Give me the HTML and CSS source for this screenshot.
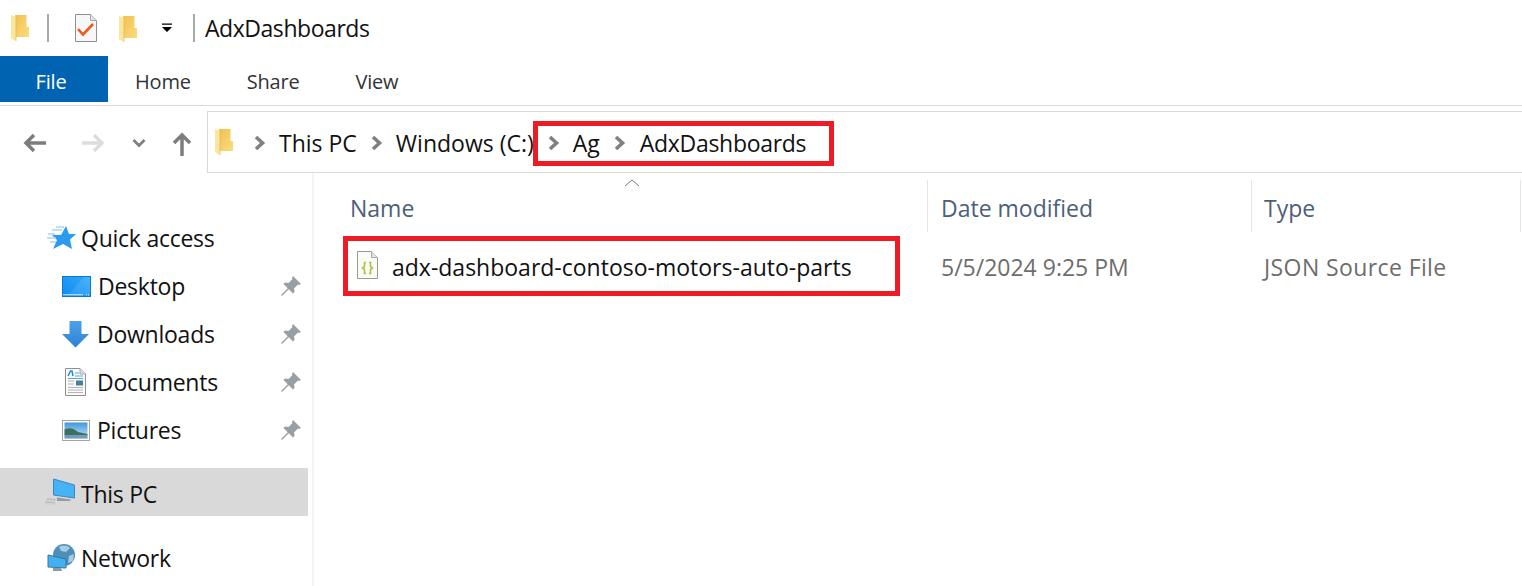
FILE: index.html
```html
<!DOCTYPE html>
<html lang="en">

<head>
   <meta charset="UTF-8">
   <title>AdxDashboards</title>
   <link rel="stylesheet" href="styles.css">
</head>

<body>
   <svg class="defs" width="0" height="0">
      <defs>
         <linearGradient id="folderBody" x1="0" y1="0" x2="1" y2="1">
            <stop offset="0" stop-color="#f0c14f" />
            <stop offset="1" stop-color="#fbdc80" />
         </linearGradient>
         <linearGradient id="deskBlue" x1="0" y1="1" x2="1" y2="0">
            <stop offset="0" stop-color="#0d8bf0" />
            <stop offset="1" stop-color="#33a9fb" />
         </linearGradient>
         <linearGradient id="arrowBlue" x1="0" y1="0" x2="0" y2="1">
            <stop offset="0" stop-color="#4ea1e8" />
            <stop offset="1" stop-color="#2b83d6" />
         </linearGradient>
         <linearGradient id="skyBlue" x1="0" y1="0" x2="0" y2="1">
            <stop offset="0" stop-color="#3f97dc" />
            <stop offset="1" stop-color="#cfe6f5" />
         </linearGradient>
         <symbol id="folder" viewBox="0 0 19 28">
            <path d="M4 1H15.500V13H18V23H4Z" fill="url(#folderBody)" />
            <path d="M0 1L5 3V27L1 25L0 24Z" fill="#fde59c" />
            <path d="M5 3V27" stroke="#e2b655" stroke-width=".7" />
         </symbol>
         <symbol id="chev" viewBox="0 0 12 16">
            <path d="M2 2L8.500 8L2 14" fill="none" stroke="#808080" stroke-width="3.600" />
         </symbol>
         <symbol id="pin" viewBox="0 0 22 22">
            <path d="M13 1L21 9L19 10L18 9.500L14 13.500L14.500 17L13 18.500L8.800 14.200L2 21L1 20L7.800 13.200L3.500 9L5 7.500L8.500 8L12.500 4L12 3Z" fill="#97a0a6" />
         </symbol>
      </defs>
   </svg>

   <header class="titlebar">
      <svg class="ico-folder"><use href="#folder" /></svg>
      <span class="qa-sep"></span>
      <svg class="ico-props" width="22" height="28" viewBox="0 0 22 28">
         <path d="M.5 .5H15.500L21.500 6.500V27.500H.5Z" fill="#f7f7f7" stroke="#8f8f8f" />
         <path d="M15.500 .5V6.500H21.500" fill="#e4e4e4" stroke="#a8a8a8" />
         <path d="M3 15L8 20.500L18 10" fill="none" stroke="#f2581c" stroke-width="2.600" />
      </svg>
      <svg class="ico-folder qa-second"><use href="#folder" /></svg>
      <svg class="qa-more" width="12" height="10" viewBox="0 0 12 10">
         <path d="M1 .5H11V1.800H1ZM1 4H11L6 9Z" fill="#000" />
      </svg>
      <span class="qa-sep qa-sep-last"></span>
      <span class="window-title">AdxDashboards</span>
   </header>

   <nav class="ribbon">
      <div class="tab tab-file">File</div>
      <div class="tab tab-home">Home</div>
      <div class="tab tab-share">Share</div>
      <div class="tab tab-view">View</div>
   </nav>

   <section class="addressrow">
      <div class="navbtns">
         <svg class="nav-back" width="24" height="20" viewBox="0 0 24 20">
            <path d="M23 10H3M11 2L3 10L11 18" fill="none" stroke="#7d7d7d" stroke-width="3.500" />
         </svg>
         <svg class="nav-fwd" width="24" height="20" viewBox="0 0 24 20">
            <path d="M1 10H21M13 2L21 10L13 18" fill="none" stroke="#dddddd" stroke-width="3.500" />
         </svg>
         <svg class="nav-recent" width="14" height="10" viewBox="0 0 14 10">
            <path d="M1.500 2L7 7.500L12.500 2" fill="none" stroke="#808080" stroke-width="2.800" />
         </svg>
         <svg class="nav-up" width="20" height="24" viewBox="0 0 20 24">
            <path d="M10 24V3M2 11L10 3L18 11" fill="none" stroke="#7d7d7d" stroke-width="3.500" />
         </svg>
      </div>
      <div class="addressbar">
         <svg class="ico-folder"><use href="#folder" /></svg>
         <svg class="crumb-chev first"><use href="#chev" /></svg>
         <span class="crumb">This PC</span>
         <svg class="crumb-chev"><use href="#chev" /></svg>
         <span class="crumb">Windows (C:)</span>
         <svg class="crumb-chev"><use href="#chev" /></svg>
         <span class="crumb">Ag</span>
         <svg class="crumb-chev"><use href="#chev" /></svg>
         <span class="crumb crumb-current">AdxDashboards</span>
      </div>
   </section>

   <main class="explorer">
      <aside class="sidebar">
         <div class="side-row top">
            <svg class="side-ico" width="32" height="26" viewBox="0 0 32 26">
               <path d="M19 1L22 9H29L23 14.500L25 24L16 19L6 24L10 15L5 10H14Z" fill="#2b9bf0" />
               <path d="M9 2H17M5 5H15M1 9H8M0 13H9M3 17H9" stroke="#a9d5f6" stroke-width="1.300" />
            </svg>
            <span>Quick access</span>
         </div>
         <div class="side-row sub">
            <svg class="side-ico" width="29" height="21" viewBox="0 0 29 21">
               <rect x=".5" y=".5" width="28" height="20" fill="url(#deskBlue)" stroke="#0a78cc" />
               <path d="M6 19L22 1H28V19Z" fill="#fff" opacity=".1" />
               <path d="M1 18.800H28" stroke="#dff1ff" stroke-dasharray="20 3 1 1 1 1" />
            </svg>
            <span>Desktop</span>
            <svg class="pin"><use href="#pin" /></svg>
         </div>
         <div class="side-row sub">
            <svg class="side-ico" width="27" height="27" viewBox="0 0 27 27">
               <path d="M7.500 0H19.500V13H27L13.500 26.500L0 13H7.500Z" fill="url(#arrowBlue)" />
            </svg>
            <span class="label-down">Downloads</span>
            <svg class="pin"><use href="#pin" /></svg>
         </div>
         <div class="side-row sub">
            <svg class="side-ico doc" width="21" height="28" viewBox="0 0 21 28">
               <path d="M.5 .5H15L20.500 6V27.500H.5Z" fill="#fafafa" stroke="#8f8f8f" />
               <path d="M15 .5V6H20.500" fill="#ddd" stroke="#aaa" />
               <path d="M3 8L5.500 3H7L8 8" fill="none" stroke="#1f8ae0" stroke-width="1.500" />
               <path d="M10 5H14M10 8H18M3 10.500H18" stroke="#5aa9e6" />
               <rect x="11" y="12.500" width="7" height="5" fill="#4b7f93" />
               <path d="M3 13H9M3 16H9M3 19.500H18M3 22H18M3 24.500H18" stroke="#b4b4b4" />
            </svg>
            <span>Documents</span>
            <svg class="pin"><use href="#pin" /></svg>
         </div>
         <div class="side-row sub">
            <svg class="side-ico" width="28" height="21" viewBox="0 0 28 21">
               <rect x=".5" y=".5" width="27" height="20" fill="#fff" stroke="#a4a4a4" />
               <rect x="2.500" y="2.500" width="23" height="16" fill="url(#skyBlue)" />
               <path d="M2.500 9.500C8 7 12 9 16 12L25.500 14V15H2.500Z" fill="#3c6f5e" />
               <path d="M2.500 15H25.500V18.500H2.500Z" fill="#6d9db8" />
            </svg>
            <span>Pictures</span>
            <svg class="pin"><use href="#pin" /></svg>
         </div>
         <div class="side-row top selected">
            <svg class="side-ico" width="32" height="28" viewBox="0 0 32 28">
               <path d="M9.500 1L30.500 7V20L9.500 17Z" fill="#45b3f5" stroke="#3c87c0" />
               <path d="M13 19.500L27 21.500L26 23H13Z" fill="#9a9a9a" />
               <path d="M4 19L13 20L11 27H0Z" fill="#d4d4d4" />
               <path d="M3 21L12 22M1.500 24L11 25" stroke="#a4a4a4" stroke-dasharray="2 1" />
            </svg>
            <span>This PC</span>
         </div>
         <div class="side-row top network">
            <svg class="side-ico" width="28" height="28" viewBox="0 0 28 28">
               <circle cx="17" cy="11" r="11" fill="#4c8fb8" />
               <path d="M12 3C16 1 20 1 23 4L19 8L14 7ZM22 12L27 10L26 17L21 19Z" fill="#a9cbe0" />
               <path d="M1 11L19 15V24L1 23Z" fill="#42b1f4" stroke="#38749e" />
               <path d="M6 24H14L15 27H6Z" fill="#8e9aa3" />
            </svg>
            <span>Network</span>
         </div>
      </aside>

      <div class="files">
         <svg class="sort-caret" width="16" height="8" viewBox="0 0 16 8">
            <path d="M1 7L8 1L15 7" fill="none" stroke="#7a7a7a" />
         </svg>
         <div class="col-heads">
            <div class="col col-name">Name</div>
            <div class="col col-date">Date modified</div>
            <div class="col col-type">Type</div>
         </div>
         <div class="file-row">
            <div class="col col-name">
               <svg class="file-ico" width="21" height="28" viewBox="0 0 21 28">
                  <path d="M.5 .5H14.500L20.500 6.500V27.500H.5Z" fill="#fbfbf6" stroke="#9a9a9a" />
                  <path d="M14.500 .5V6.500H20.500" fill="#e3e3e3" stroke="#aaa" />
                  <path d="M9 11.500H7.500V15.500L5.500 17L7.500 18.500V22.500H9M12 11.500H13.500V15.500L15.500 17L13.500 18.500V22.500H12" fill="none" stroke="#b4bf48" stroke-width="1.600" />
               </svg>
               adx-dashboard-contoso-motors-auto-parts
            </div>
            <div class="col col-date">5/5/2024 9:25 PM</div>
            <div class="col col-type">JSON Source File</div>
         </div>
      </div>
   </main>

   <!-- red callouts on top of the screenshot -->
   <div class="callout callout-path"></div>
   <div class="callout callout-file"></div>
</body>

</html>
```

FILE: styles.css
```css
html,
body {
   margin: 0;
   padding: 0;
}

body {
   position: relative;
   width: 1522px;
   height: 586px;
   overflow: hidden;
   background-color: #fff;
   font-family: 'Open Sans', 'Noto Sans', sans-serif;
   font-size: 23px;
   color: #111;
}

.defs {
   position: absolute;
}

svg {
   display: block;
   flex: none;
}

.ico-folder {
   width: 19px;
   height: 28px;
}

/* title bar */
.titlebar {
   display: flex;
   align-items: center;
   height: 56px;
   padding-left: 11px;
}

.qa-sep {
   width: 2px;
   height: 28px;
   margin-left: 17px;
   background-color: #aaa;
}

.ico-props {
   margin-left: 26px;
}

.qa-second {
   margin-left: 22px;
   margin-top: 2px;
}

.qa-more {
   margin-left: 23px;
}

.qa-sep-last {
   margin-left: 20px;
}

.window-title {
   margin-left: 10px;
   letter-spacing: -0.45px;
}

/* ribbon tabs */
.ribbon {
   display: flex;
   height: 49px;
   border-bottom: 1px solid #dadada;
   font-size: 20px;
   letter-spacing: -0.2px;
   color: #333;
}

.tab {
   height: 46px;
   line-height: 52px;
}

.tab-file {
   width: 102px;
   padding-right: 6px;
   text-align: center;
   background-color: #0063b1;
   color: #fff;
}

.tab-home {
   margin-left: 27px;
}

.tab-share {
   margin-left: 56px;
}

.tab-view {
   margin-left: 56px;
}

/* address row */
.addressrow {
   display: flex;
   align-items: center;
   height: 67px;
}

.navbtns {
   display: flex;
   align-items: center;
   width: 207px;
   margin-top: 6px;
   padding-left: 23px;
   box-sizing: border-box;
}

.nav-fwd {
   margin-left: 34px;
}

.nav-recent {
   margin-left: 27px;
}

.nav-up {
   margin-left: 26px;
   margin-top: 2px;
}

.addressbar {
   display: flex;
   align-items: center;
   flex: 1;
   height: 62px;
   box-sizing: border-box;
   margin-top: 5px;
   padding-left: 7px;
   border: 1px solid #d9d9d9;
   border-right: 0;
}

.crumb-chev {
   width: 12px;
   height: 16px;
   margin: 2px 13px 0 14px;
}

.crumb-chev.first {
   margin-left: 20px;
}

.crumb {
   padding-top: 2px;
   white-space: nowrap;
}

.crumb-current {
   margin-left: 1px;
   letter-spacing: -0.3px;
}

/* nav pane */
.explorer {
   display: flex;
}

.sidebar {
   width: 314px;
   height: 413px;
   padding-top: 41px;
   box-sizing: border-box;
   border-right: 2px solid #f3f3f3;
   flex: none;
   letter-spacing: -0.25px;
}

.side-row {
   display: flex;
   align-items: center;
   width: 308px;
   height: 48px;
   white-space: nowrap;
}

.side-row.top {
   padding-left: 47px;
   box-sizing: border-box;
}

.side-row.top .side-ico {
   margin-right: 2px;
}

.side-row.sub {
   padding-left: 62px;
   box-sizing: border-box;
}

.side-row.sub .side-ico {
   margin-right: 7px;
}

.side-row.sub span {
   flex: 1;
}

.side-row.sub .label-down {
   padding-left: 1px;
}

.side-row.sub .doc {
   margin-left: 3px;
   margin-right: 11px;
}

.pin {
   width: 22px;
   height: 22px;
   margin-right: 6px;
}

.selected {
   margin-top: 14px;
   background-color: #d9d9d9;
}

.side-row.selected {
   padding-left: 44px;
}

.side-row.selected .side-ico {
   margin-right: 5px;
}

.selected span {
   padding-top: 3px;
}

.network {
   margin-top: 18px;
}

.side-row.network .side-ico {
   margin-right: 6px;
}

/* file list */
.files {
   position: relative;
   flex: 1;
   padding-top: 7px;
}

.sort-caret {
   position: absolute;
   left: 310px;
   top: 6px;
}

.col-heads,
.file-row {
   display: flex;
   align-items: center;
}

.col-heads {
   height: 52px;
   color: #4c607a;
}

.col-heads .col {
   padding-top: 3px;
}

.col {
   box-sizing: border-box;
   height: 100%;
   display: flex;
   align-items: center;
   white-space: nowrap;
}

.col-name {
   width: 613px;
   padding-left: 36px;
}

.col-date {
   width: 324px;
   padding-left: 13px;
}

.col-type {
   width: 270px;
   padding-left: 12px;
}

.col-heads .col-date,
.col-heads .col-type {
   border-left: 1px solid #e5e5e5;
}

.col-heads .col-type {
   border-right: 1px solid #e5e5e5;
}

.file-row {
   height: 48px;
   margin-top: 11px;
   color: #6d6d6d;
}

.file-row .col-name {
   padding-left: 43px;
   color: #111;
}

.file-row .col-date {
   padding-left: 14px;
}

.file-row .col-type {
   padding-left: 13px;
   letter-spacing: 0.4px;
}

.file-ico {
   margin-right: 14px;
   margin-top: -4px;
}

/* red callouts */
.callout {
   position: absolute;
   box-sizing: border-box;
   border: 5px solid #ed1c24;
}

.callout-path {
   left: 533px;
   top: 121px;
   width: 301px;
   height: 45px;
}

.callout-file {
   left: 343px;
   top: 236px;
   width: 557px;
   height: 60px;
}
```
